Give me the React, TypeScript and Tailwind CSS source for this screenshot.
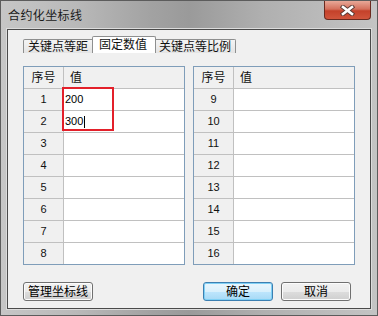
const FONT = "font-['Liberation_Sans','Noto_Sans_CJK_SC',sans-serif]";

function Grid({
  rows,
  values = {},
  marked,
}: {
  rows: number[];
  values?: Record<number, string>;
  marked?: boolean;
}) {
  return (
    <div className="relative w-[162px] h-[199px] border border-[#7f9db9] bg-white flex flex-col">
      <div className="flex h-[22px] shrink-0 border-b border-[#c0c0c0] bg-[#f0f0f0] text-[12px] text-[#111]">
        <div className="w-[40px] border-r border-[#c0c0c0] flex items-center justify-center">序号</div>
        <div className="flex-1 pl-[6px] flex items-center">值</div>
      </div>
      {rows.map((n, i) => (
        <div
          key={n}
          className={
            i === rows.length - 1
              ? "flex h-[21px] shrink-0"
              : "flex h-[22px] shrink-0 border-b border-[#c0c0c0]"
          }
        >
          <div className="w-[40px] border-r border-[#c0c0c0] bg-[#f0f0f0] flex items-center justify-center text-[11px] text-[#111]">
            {n}
          </div>
          <div className="flex-1 flex items-center pl-[1px] text-[11px] text-black">
            {values[n]}
            {n === 2 && <span className="ml-[1px] w-[1px] h-[12px] bg-black" />}
          </div>
        </div>
      ))}
      {marked && (
        <div className="absolute left-[38px] top-[20px] w-[52px] h-[44px] border-2 border-[#e3202a]" />
      )}
    </div>
  );
}

function Button({ label, primary }: { label: string; primary?: boolean }) {
  return (
    <div
      className={
        primary
          ? "w-[70px] h-[19px] rounded-[3px] border border-[#3c7fb1] bg-[linear-gradient(180deg,#eaf6fd_0%,#d9f0fc_50%,#bee6fd_51%,#a7d9f5_100%)] shadow-[inset_0_0_0_1px_#7fd0f5] flex items-center justify-center text-[12px] text-black"
          : "w-[70px] h-[19px] rounded-[3px] border border-[#707070] bg-[linear-gradient(180deg,#f2f2f2_0%,#ebebeb_50%,#dddddd_51%,#cfcfcf_100%)] shadow-[inset_0_0_0_1px_#fcfcfc] flex items-center justify-center text-[12px] text-black"
      }
    >
      {label}
    </div>
  );
}

export default function App() {
  return (
    <div
      className={`w-[378px] h-[316px] flex flex-col border border-[#5c5c5c] bg-[linear-gradient(90deg,#c6c6c6_0%,#b9b9b9_20%,#a2a2a2_40%,#9a9a9a_50%,#b0b0b0_70%,#c4c4c4_100%)] ${FONT}`}
    >
      <div className="h-[28px] shrink-0 flex items-start">
        <span className="ml-[7px] mt-[8px] text-[12px] leading-[14px] tracking-[0.4px] text-[#1a1a1a]">
          合约化坐标线
        </span>
        <div className="ml-auto mr-[6px] w-[47px] h-[19px] rounded-b-[4px] border border-t-0 border-[#6a2a1f] bg-[linear-gradient(180deg,#e8a898_0%,#d4705c_45%,#c4412a_55%,#d0553c_100%)] flex items-center justify-center">
          <svg width="15" height="11" viewBox="0 0 15 11">
            <path d="M3 2 L12 9 M12 2 L3 9" stroke="#5a3a34" strokeWidth="4.4" strokeLinecap="square" />
            <path d="M3 2 L12 9 M12 2 L3 9" stroke="#ffffff" strokeWidth="2.6" strokeLinecap="square" />
          </svg>
        </div>
      </div>
      <div className="mx-[6px] h-[280px] shrink-0 border border-[#4a4a4a] bg-[#f0f0f0] flex flex-col shadow-[0_0_0_1px_#dcdcdc]">
        <div className="ml-[15px] mt-[6px] h-[17px] flex items-end text-[12px] text-[#111]">
          <div className="w-[70px] h-[14px] border border-b-0 border-[#8e8f8f] rounded-tl-[2px] bg-[linear-gradient(180deg,#f4f4f4,#e4e4e4)] pl-[4px] pt-[1px] leading-[12px] whitespace-nowrap">
            关键点等距
          </div>
          <div className="w-[64px] h-[17px] -ml-[1px] border border-b-0 border-[#8e8f8f] rounded-t-[2px] bg-white pl-[6px] pt-[1px] leading-[14px] whitespace-nowrap">
            固定数值
          </div>
          <div className="w-[81px] h-[14px] -ml-[1px] border border-b-0 border-[#8e8f8f] rounded-tr-[2px] bg-[linear-gradient(180deg,#f4f4f4,#e4e4e4)] pl-[3px] pt-[1px] leading-[12px] whitespace-nowrap">
            关键点等比例
          </div>
        </div>
        <div className="ml-[15px] mt-[13px] flex gap-[8px]">
          <Grid rows={[1, 2, 3, 4, 5, 6, 7, 8]} values={{ 1: "200", 2: "300" }} marked />
          <Grid rows={[9, 10, 11, 12, 13, 14, 15, 16]} />
        </div>
        <div className="ml-[15px] mt-[17px] flex">
          <Button label="管理坐标线" />
          <div className="ml-[110px]">
            <Button label="确定" primary />
          </div>
          <div className="ml-[8px]">
            <Button label="取消" />
          </div>
        </div>
      </div>
    </div>
  );
}
